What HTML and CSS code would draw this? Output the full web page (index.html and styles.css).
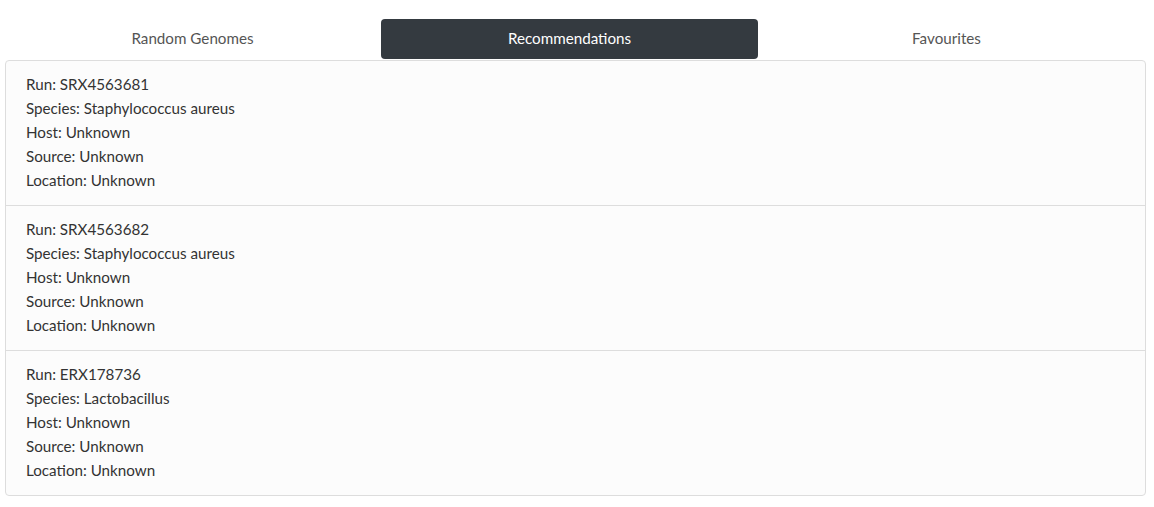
FILE: index.html
```html
<!DOCTYPE html>
<html>
<head>
<meta charset="utf-8">
<link rel="stylesheet" href="styles.css">
</head>
<body>
<div class="page">
  <nav class="tabs">
    <div class="tab">Random Genomes</div>
    <div class="tab active">Recommendations</div>
    <div class="tab">Favourites</div>
  </nav>
  <div class="card">
    <div class="item">
      <div class="line">Run: SRX4563681</div>
      <div class="line">Species: Staphylococcus aureus</div>
      <div class="line">Host: Unknown</div>
      <div class="line">Source: Unknown</div>
      <div class="line">Location: Unknown</div>
    </div>
    <div class="item">
      <div class="line">Run: SRX4563682</div>
      <div class="line">Species: Staphylococcus aureus</div>
      <div class="line">Host: Unknown</div>
      <div class="line">Source: Unknown</div>
      <div class="line">Location: Unknown</div>
    </div>
    <div class="item">
      <div class="line">Run: ERX178736</div>
      <div class="line">Species: Lactobacillus</div>
      <div class="line">Host: Unknown</div>
      <div class="line">Source: Unknown</div>
      <div class="line">Location: Unknown</div>
    </div>
  </div>
</div>
</body>
</html>
```
FILE: styles.css
```css
html, body {
  margin: 0;
  padding: 0;
  background: #ffffff;
}
body {
  font-family: "Lato", "Open Sans", sans-serif;
  font-size: 15.2px;
  color: #333333;
}
.page {
  padding: 19px 8px 0 5px;
}
.tabs {
  display: grid;
  grid-template-columns: 1fr 1fr 1fr;
  margin: 0 11px 1px -1px;
}
.tab {
  height: 40px;
  box-sizing: border-box;
  padding-bottom: 2px;
  display: flex;
  align-items: center;
  justify-content: center;
  color: #555555;
  border-radius: 4px;
}
.tab.active {
  background: #343a40;
  color: #ffffff;
}
.card {
  background: #fcfcfc;
  border: 1px solid #dddddd;
  border-radius: 4px;
}
.item {
  padding: 11px 20px 13px;
  border-top: 1px solid #dddddd;
}
.item:first-child {
  border-top: none;
}
.line {
  line-height: 24px;
}
```
